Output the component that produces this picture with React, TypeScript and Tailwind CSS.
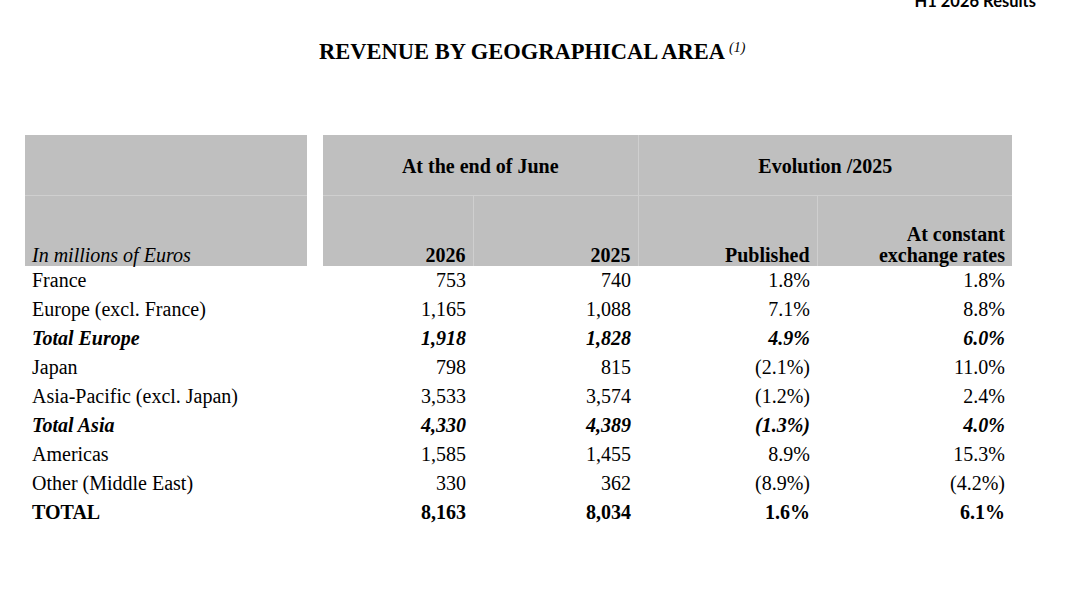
type Row = {
  label: string;
  values: string[];
  style?: "subtotal" | "total";
};

const rows: Row[] = [
  { label: "France", values: ["753", "740", "1.8%", "1.8%"] },
  { label: "Europe (excl. France)", values: ["1,165", "1,088", "7.1%", "8.8%"] },
  { label: "Total Europe", values: ["1,918", "1,828", "4.9%", "6.0%"], style: "subtotal" },
  { label: "Japan", values: ["798", "815", "(2.1%)", "11.0%"] },
  { label: "Asia-Pacific (excl. Japan)", values: ["3,533", "3,574", "(1.2%)", "2.4%"] },
  { label: "Total Asia", values: ["4,330", "4,389", "(1.3%)", "4.0%"], style: "subtotal" },
  { label: "Americas", values: ["1,585", "1,455", "8.9%", "15.3%"] },
  { label: "Other (Middle East)", values: ["330", "362", "(8.9%)", "(4.2%)"] },
  { label: "TOTAL", values: ["8,163", "8,034", "1.6%", "6.1%"], style: "total" },
];

function rowClass(style?: Row["style"]) {
  if (style === "subtotal") return "font-bold italic";
  if (style === "total") return "font-bold";
  return "";
}

export default function App() {
  return (
    <div className="relative h-[598px] w-[1080px] overflow-hidden bg-white font-['Liberation_Serif',serif] text-black">
      <div className="flex h-[9px] items-end justify-end overflow-hidden pr-[44px]">
        <span className="font-['Lato',sans-serif] text-[16.5px] font-bold leading-none">
          H1 2026 Results
        </span>
      </div>

      <h1 className="mt-[32px] pl-[319px] text-[22.5px] font-bold leading-none">
        REVENUE BY GEOGRAPHICAL AREA
        <sup className="ml-[4px] text-[14px] font-normal italic">(1)</sup>
      </h1>

      <table className="ml-[25px] mt-[71px] w-[987px] table-fixed border-collapse text-[20px]">
        <colgroup>
          <col className="w-[282px]" />
          <col className="w-[16px]" />
          <col className="w-[150px]" />
          <col className="w-[165px]" />
          <col className="w-[179px]" />
          <col className="w-[195px]" />
        </colgroup>
        <thead>
          <tr className="h-[61px]">
            <th className="border-b border-[#cfcfcf] bg-[#bfbfbf]" />
            <th />
            <th
              colSpan={2}
              className="border-b border-r border-[#cfcfcf] bg-[#bfbfbf] pt-[3px] text-center align-middle font-bold leading-[21px]"
            >
              At the end of June
            </th>
            <th
              colSpan={2}
              className="border-b border-[#cfcfcf] bg-[#bfbfbf] pt-[3px] text-center align-middle font-bold leading-[21px]"
            >
              Evolution /2025
            </th>
          </tr>
          <tr className="h-[70px]">
            <th className="bg-[#bfbfbf] px-[7px] text-left align-bottom font-normal italic leading-[21px]">
              In millions of Euros
            </th>
            <th />
            <th className="border-r border-[#cfcfcf] bg-[#bfbfbf] px-[7px] text-right align-bottom font-bold leading-[21px]">
              2026
            </th>
            <th className="border-r border-[#cfcfcf] bg-[#bfbfbf] px-[7px] text-right align-bottom font-bold leading-[21px]">
              2025
            </th>
            <th className="border-r border-[#cfcfcf] bg-[#bfbfbf] px-[7px] text-right align-bottom font-bold leading-[21px]">
              Published
            </th>
            <th className="bg-[#bfbfbf] px-[7px] text-right align-bottom font-bold leading-[21px]">
              At constant
              <br />
              exchange rates
            </th>
          </tr>
        </thead>
        <tbody>
          {rows.map((row) => (
            <tr key={row.label} className={`h-[29px] leading-[29px] ${rowClass(row.style)}`}>
              <td className="whitespace-nowrap px-[7px] text-left">{row.label}</td>
              <td />
              {row.values.map((v, i) => (
                <td key={i} className="px-[7px] text-right">
                  {v}
                </td>
              ))}
            </tr>
          ))}
        </tbody>
      </table>
    </div>
  );
}
